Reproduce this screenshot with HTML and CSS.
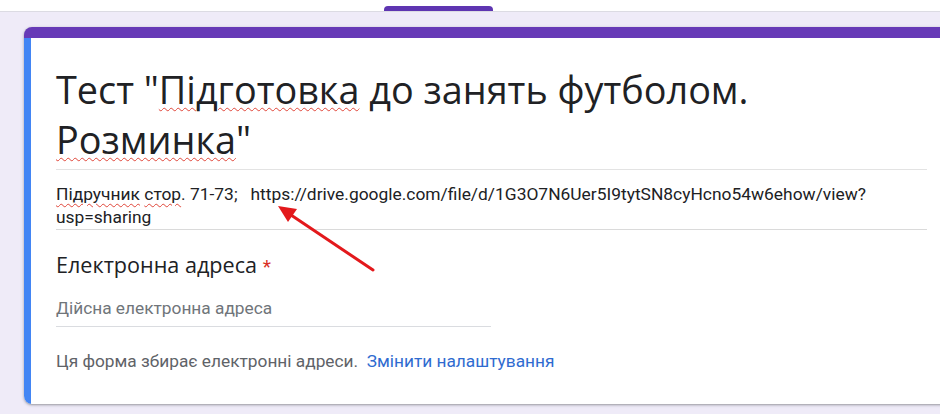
FILE: index.html
```html
<!DOCTYPE html>
<html lang="uk">
<head>
    <meta charset="UTF-8">
    <meta name="viewport" content="width=device-width, initial-scale=1.0">
    <title>Тест "Підготовка до занять футболом. Розминка"</title>
    <link rel="stylesheet" href="styles.css">
</head>
<body>
    <div class="top-strip">
        <div class="tab-mark"></div>
    </div>

    <main class="form-page">
        <section class="form-card">
            <div class="card-body">
                <div class="form-title">
                    <h1>Тест "<span class="misspelled">Підготовка</span> до занять футболом. <span class="misspelled">Розминка</span>"</h1>
                </div>

                <div class="form-description">
                    <span class="misspelled">Підручник</span> <span class="misspelled">стор</span>. 71-73;&nbsp;&nbsp; https://drive.google.com/file/d/1G3O7N6Uer5I9tytSN8cyHcno54w6ehow/view?usp=sharing
                </div>

                <div class="question">
                    <div class="question-title">Електронна адреса <span class="required">*</span></div>
                    <div class="answer-line">Дійсна електронна адреса</div>
                </div>

                <p class="form-note">
                    Ця форма збирає електронні адреси.&nbsp; <a href="#">Змінити налаштування</a>
                </p>
            </div>
        </section>

        <!-- red pointer drawn over the description -->
        <svg class="pointer" width="120" height="80" viewBox="0 0 120 80">
            <line x1="109" y1="76" x2="24" y2="19" stroke="#e3191c" stroke-width="3" stroke-linecap="round"/>
            <polygon points="14,12 33,15 24,28" fill="#e3191c"/>
        </svg>
    </main>
</body>
</html>
```

FILE: styles.css
```css
/* General Styles */
body {
    margin: 0;
    padding: 0;
    font-family: Roboto, "Noto Sans", Arial, sans-serif;
    color: #202124;
    background-color: #ffffff;
    overflow: hidden;
}

.top-strip {
    height: 11px;
    border-bottom: 1px solid #dcdbe3;
    background-color: #ffffff;
    display: flex;
    align-items: flex-end;
}

.tab-mark {
    margin-left: 384px;
    width: 109px;
    height: 5px;
    background-color: #5e35b1;
    border-radius: 4px 4px 0 0;
}

.form-page {
    position: relative;
    box-sizing: border-box;
    height: calc(100vh - 12px);
    background-color: #efebf8;
    padding: 15px 0 0 24px;
}

/* Card */
.form-card {
    margin-right: -30px;
    background-color: white;
    border-top: 11px solid #673ab7;
    border-radius: 8px;
    overflow: hidden;
    box-shadow: 0 1px 2px rgba(60, 64, 67, 0.35), 0 1px 3px 1px rgba(60, 64, 67, 0.12);
}

.card-body {
    border-left: 7px solid #4285f4;
    padding: 0 43px 31px 25px;
}

.form-title {
    padding: 27px 0 4px;
    border-bottom: 1px solid #e3e3e3;
}

.form-title h1 {
    margin: 0;
    font-family: "Open Sans", "Noto Sans", sans-serif;
    font-weight: 400;
    font-size: 37.8px;
    line-height: 50px;
    color: #202124;
}

.misspelled {
    text-decoration: underline wavy #e0463a;
    text-decoration-thickness: 1px;
    text-underline-offset: 3px;
}

.form-description {
    padding: 13px 0 0;
    font-size: 17.4px;
    line-height: 23px;
    border-bottom: 1px solid #dadada;
}

.question {
    padding-top: 21px;
}

.question-title {
    font-family: "Open Sans", "Noto Sans", sans-serif;
    font-size: 21.6px;
    line-height: 28px;
    color: #202124;
}

.required {
    font-family: Roboto, sans-serif;
    font-size: 19px;
    color: #d93025;
}

.answer-line {
    margin-top: 16px;
    width: 435px;
    padding-bottom: 6px;
    border-bottom: 1px solid #dadce0;
    font-size: 17.3px;
    line-height: 23px;
    color: #70757a;
}

.form-note {
    margin: 23px 0 0;
    font-size: 17.3px;
    line-height: 23px;
    color: #5f6368;
}

.form-note a {
    color: #2f6bd0;
    text-decoration: none;
}

.pointer {
    position: absolute;
    left: 264px;
    top: 182px;
}
```
